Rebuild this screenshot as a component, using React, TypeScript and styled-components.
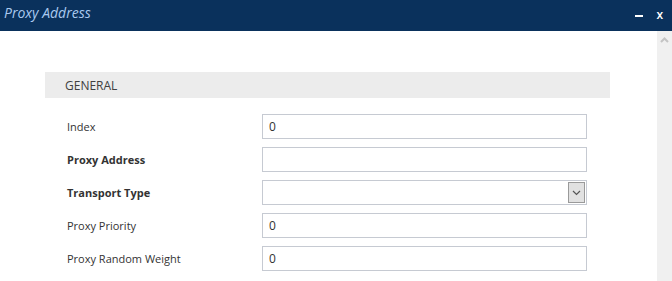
import styled, { createGlobalStyle } from "styled-components"

const GlobalStyle = createGlobalStyle`
  html, body {
    margin: 0;
    padding: 0;
    background: #ffffff;
    font-family: "Open Sans", "Liberation Sans", sans-serif;
  }
`

const Dialog = styled.div`
  width: 672px;
  height: 281px;
  display: flex;
  flex-direction: column;
  overflow: hidden;
`

const TitleBar = styled.header`
  height: 31px;
  flex: none;
  background: #0a315c;
  display: flex;
  align-items: center;
  padding-left: 4px;
  padding-right: 9px;
`

const Title = styled.span`
  flex: 1;
  font-style: italic;
  font-size: 14px;
  color: #a9c9ef;
  margin-top: -7px;
`

const Controls = styled.div`
  display: flex;
  align-items: center;
  gap: 13px;
  color: #ffffff;
`

const Minimize = styled.span`
  width: 8px;
  height: 2px;
  background: #ffffff;
  margin-top: 1px;
`

const Close = styled.span`
  font-size: 12px;
  font-weight: 600;
  line-height: 1;
  margin-top: -1px;
`

const Body = styled.div`
  flex: 1;
  display: flex;
`

const Content = styled.main`
  flex: 1;
  padding: 41px 0 0 45px;
`

const Scrollbar = styled.div`
  width: 15px;
  background: #f0f0f0;
  display: flex;
  justify-content: center;
  padding-top: 6px;
`

const SectionHeader = styled.div`
  width: 545px;
  height: 26px;
  background: #ececec;
  display: flex;
  align-items: center;
  padding-left: 20px;
  font-size: 12px;
  color: #404040;
`

const Form = styled.div`
  display: flex;
  flex-direction: column;
  gap: 8px;
  padding: 16px 0 0 22px;
`

const Row = styled.div`
  display: flex;
  align-items: center;
  height: 25px;
`

const Label = styled.label<{ $bold?: boolean }>`
  width: 195px;
  font-size: 11px;
  color: #333333;
  font-weight: ${(p) => (p.$bold ? 700 : 400)};
`

const Field = styled.div`
  position: relative;
  width: 325px;
  height: 25px;
  box-sizing: border-box;
  border: 1px solid #c6cad2;
  background: #ffffff;
  display: flex;
  align-items: center;
  padding-left: 6px;
  font-size: 12px;
  color: #333333;
`

const SelectButton = styled.div`
  position: absolute;
  right: 1px;
  top: 1px;
  bottom: 1px;
  width: 15px;
  background: #e1e1e1;
  border: 1px solid #9a9a9a;
  display: flex;
  align-items: center;
  justify-content: center;
`

type FieldRow = { label: string; value?: string; bold?: boolean; select?: boolean }

const rows: FieldRow[] = [
  { label: "Index", value: "0" },
  { label: "Proxy Address", bold: true },
  { label: "Transport Type", bold: true, select: true },
  { label: "Proxy Priority", value: "0" },
  { label: "Proxy Random Weight", value: "0" },
]

function App() {
  return (
    <Dialog>
      <GlobalStyle />
      <TitleBar>
        <Title>Proxy Address</Title>
        <Controls>
          <Minimize />
          <Close>x</Close>
        </Controls>
      </TitleBar>
      <Body>
        <Content>
          <SectionHeader>GENERAL</SectionHeader>
          <Form>
            {rows.map((r) => (
              <Row key={r.label}>
                <Label $bold={r.bold}>{r.label}</Label>
                <Field>
                  {r.value}
                  {r.select && (
                    <SelectButton>
                      <svg width="9" height="6" viewBox="0 0 9 6">
                        <path d="M1 1 L4.5 4.5 L8 1" fill="none" stroke="#555" strokeWidth="1.2" />
                      </svg>
                    </SelectButton>
                  )}
                </Field>
              </Row>
            ))}
          </Form>
        </Content>
        <Scrollbar>
          <svg width="9" height="6" viewBox="0 0 9 6">
            <path d="M1 5 L4.5 1.5 L8 5" fill="none" stroke="#c4c4c4" strokeWidth="2" />
          </svg>
        </Scrollbar>
      </Body>
    </Dialog>
  )
}

export default App
